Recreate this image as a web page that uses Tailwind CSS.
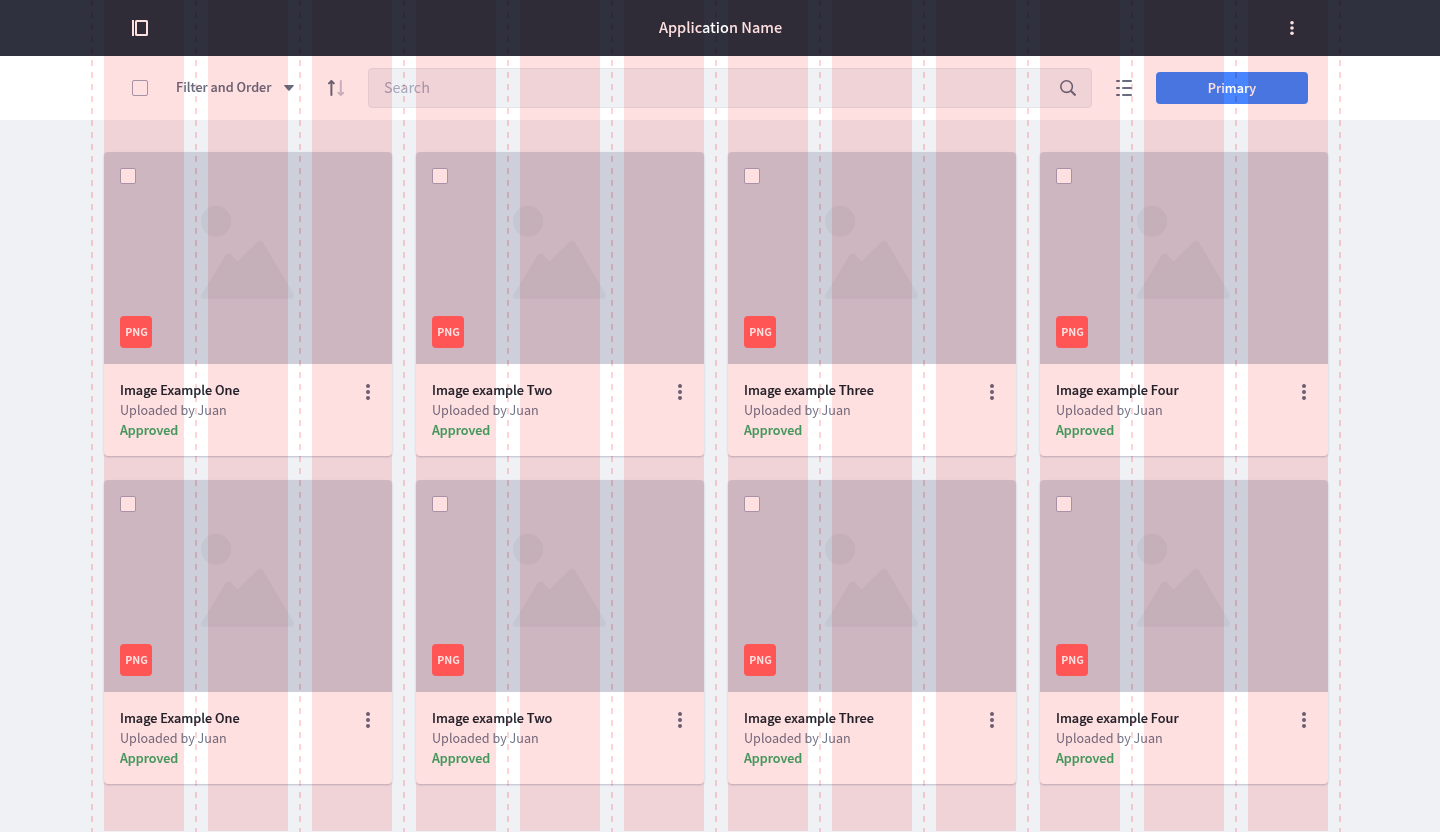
<!DOCTYPE html>
<html lang="en">
<head>
<meta charset="utf-8">
<title>Application Name</title>
<script src="https://cdn.jsdelivr.net/npm/@tailwindcss/browser@4"></script>
</head>
<body class="relative h-[832px] w-[1440px] overflow-hidden bg-[#f0f1f5] font-['Noto_Sans_CJK_SC','Noto_Sans',sans-serif] text-[#6b6b7f]">
<header class="grid h-14 grid-cols-[1fr_auto_1fr] items-center bg-[#2f313e] px-[132px] text-white">
  <svg class="size-4" viewBox="0 0 16 16" fill="none" stroke="currentColor"><path d="M1 0V16" stroke-width="2"/><rect x="4" y="1" width="11" height="14" rx=".5" stroke-width="2"/></svg>
  <h1 class="pb-0.5 pl-px text-[14.5px] leading-6 font-medium">Application Name</h1>
  <svg class="mr-2 h-4 w-4 justify-self-end" viewBox="0 0 16 16" fill="currentColor"><circle cx="8" cy="2.7" r="1.8"/><circle cx="8" cy="8" r="1.8"/><circle cx="8" cy="13.2" r="1.8"/></svg>
</header>
<nav class="flex h-16 items-center bg-white px-[132px]">
  <span class="size-4 rounded-[2px] border border-[#a6a6bd]"></span>
  <span class="ml-7 w-[96px] pb-0.5 text-[12.66px] leading-5 font-medium whitespace-nowrap [-webkit-text-stroke:0.12px]">Filter and Order</span>
  <svg class="ml-3 h-[6px] w-[10px]" viewBox="0 0 10 6" fill="currentColor"><path d="M.8 0H9.2Q10.5 0 9.6 1L5.7 5.5Q5 6.2 4.3 5.5L.4 1Q-.5 0 .8 0Z"/></svg>
  <svg class="ml-[34px] h-4 w-4" viewBox="0 0 16 16" fill="none" stroke="currentColor" stroke-width="2" stroke-linecap="round" stroke-linejoin="round"><path d="M3.4 15V1.5M1 3.4 3.4 1 5.8 3.4"/><path d="M12.8 1V15M10.400 12.800 12.800 15 15.200 12.800" stroke="#c9c8d8"/></svg>
  <div class="ml-6 flex h-10 w-[724px] items-center justify-between rounded border border-[#e5e4ed] bg-[#f0f1f5] px-[15px] text-[14.4px] text-[#a6a6bd]">
    <span class="pb-0.5">Search</span>
    <svg class="size-4 text-[#6b6b7f]" viewBox="0 0 16 16" fill="none" stroke="currentColor" stroke-width="1.6"><circle cx="6.6" cy="6.6" r="5.8"/><path d="M10.8 10.8 15.5 15.5" stroke-width="2"/></svg>
  </div>
  <svg class="ml-6 size-4" viewBox="0 0 16 16" fill="none" stroke="currentColor" stroke-width="2" stroke-linecap="round"><path d="M1 1H3M7 1H15M1 8H3M7 8H15M1 15H3M7 15H15"/></svg>
  <button class="ml-6 h-8 w-[152px] rounded bg-[#4885ff] text-[12.6px] font-medium text-white [-webkit-text-stroke:0.1px]">Primary</button>
</nav>
<main id="cards" class="mt-8 ml-[104px] grid w-[1224px] grid-cols-4 gap-6"></main>
<template id="card">
  <article class="flex h-[304px] flex-col overflow-hidden rounded bg-white shadow-[0_1px_2px_#a6a6bdb0]">
    <div class="relative flex h-[212px] shrink-0 flex-col justify-between bg-[#cdcfdb] p-4">
      <span class="size-4 rounded-[2px] border border-[#a6a6bd] bg-white"></span>
      <svg class="absolute top-[54px] left-[97px] h-[93px] w-[93px]" viewBox="0 0 93 93" fill="#c5c7d3"><circle cx="15" cy="15.3" r="15.2"/><path d="M.5 89 24.4 49.500Q27 46 30 48.800L36.500 55.500 56 36.500Q59 33 62 36.500L92.600 88Q94 92.600 90 92.700H3Q-1 92.600.5 89Z"/></svg>
      <span class="flex size-8 items-center justify-center rounded bg-[#ff6161] pb-px pl-px text-[10.6px] font-bold text-white">PNG</span>
    </div>
    <div class="flex justify-between px-4 pt-4 text-[12.6px] leading-5">
      <div><h2 class="text-[12.68px] font-medium text-[#23242f] [-webkit-text-stroke:0.18px]"></h2><p class="text-[#74748a]">Uploaded by Juan</p><p class="font-medium text-[#42ab67] [-webkit-text-stroke:0.18px]">Approved</p></div>
      <svg class="mt-1 h-4 w-4" viewBox="0 0 16 16" fill="currentColor"><circle cx="8" cy="2" r="2"/><circle cx="8" cy="8" r="2"/><circle cx="8" cy="14" r="2"/></svg>
    </div>
  </article>
</template>
<div class="pointer-events-none absolute top-0 left-[104px] grid h-[831px] w-[1224px] grid-cols-12 gap-6 mix-blend-multiply" id="columns"></div>
<div class="pointer-events-none absolute top-0 left-[91px] flex h-[832px] gap-[102px] mix-blend-multiply" id="guides"></div>
<script>
const names = ['Image Example One', 'Image example Two', 'Image example Three', 'Image example Four'];
for (const name of [...names, ...names]) {
  const card = document.getElementById('card').content.cloneNode(true);
  card.querySelector('h2').textContent = name;
  document.getElementById('cards').append(card);
}
document.getElementById('columns').innerHTML = '<i class="bg-[#ffe0e0]"></i>'.repeat(12);
document.getElementById('guides').innerHTML = '<i class="w-[2px] bg-[repeating-linear-gradient(to_bottom,#ffd3d3_0_6px,transparent_6px_12px)]"></i>'.repeat(13);
</script>
</body>
</html>
